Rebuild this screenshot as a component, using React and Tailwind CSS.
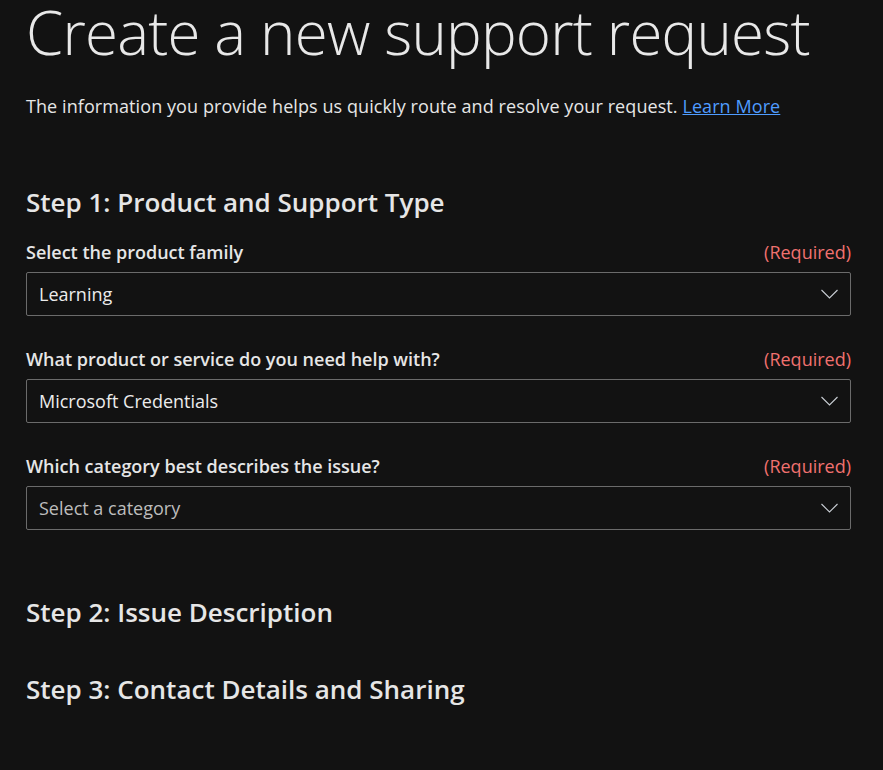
const fields = [
  { label: "Select the product family", value: "Learning", placeholder: false },
  { label: "What product or service do you need help with?", value: "Microsoft Credentials", placeholder: false },
  { label: "Which category best describes the issue?", value: "Select a category", placeholder: true },
];

const Chevron = () => (
  <svg width="17" height="10" viewBox="0 0 17 10" fill="none" className="text-[#c9ced4]">
    <path d="M0.5 1l8 8 8-8" stroke="currentColor" strokeWidth="1.1" />
  </svg>
);

const SelectField = ({ label, value, placeholder }) => (
  <div className="flex flex-col">
    <div className="flex items-center justify-between h-[26px] text-[18px]">
      <span className="font-semibold text-[#e6e6e6]">{label}</span>
      <span className="text-[#f0716f]">(Required)</span>
    </div>
    <div className="mt-[7px] h-[44px] flex items-center justify-between border border-[#6b6b6b] rounded-[2px] pl-[12px] pr-[12px]">
      <span className={placeholder ? "text-[18px] text-[#bdbdbd]" : "text-[18px] text-[#ececec]"}>{value}</span>
      <Chevron />
    </div>
  </div>
);

export default function App() {
  return (
    <div
      className="min-h-[770px] w-full bg-[#121212] text-[#e6e6e6] pl-[26px] pr-[32px] overflow-hidden"
      style={{ fontFamily: '"Open Sans", "Noto Sans", sans-serif' }}
    >
      <h1 className="text-[60px] font-light leading-[64px] whitespace-nowrap text-[#e8e8e8] tracking-[-0.8px]">
        Create a new support request
      </h1>
      <p className="mt-[30px] text-[18px] leading-[24px] tracking-[0.08px]">
        The information you provide helps us quickly route and resolve your request.{" "}
        <a href="#" className="text-[#4f9cff] underline">Learn More</a>
      </p>
      <h2 className="mt-[67px] text-[26px] font-semibold leading-[34px]">Step 1: Product and Support Type</h2>
      <div className="mt-[20px] flex flex-col gap-[30px]">
        {fields.map((f) => (
          <SelectField key={f.label} {...f} />
        ))}
      </div>
      <h2 className="mt-[65px] text-[26px] font-semibold leading-[34px]">Step 2: Issue Description</h2>
      <h2 className="mt-[43px] text-[26px] font-semibold leading-[34px]">Step 3: Contact Details and Sharing</h2>
    </div>
  );
}
